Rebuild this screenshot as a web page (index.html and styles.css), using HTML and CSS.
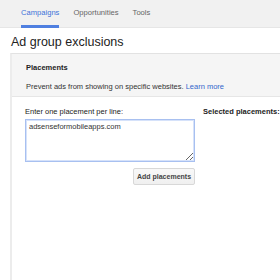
FILE: index.html
```html
<!DOCTYPE html>
<html>
<head>
<meta charset="utf-8">
<link rel="stylesheet" href="styles.css">
</head>
<body>
<nav class="tabs">
  <a class="tab active">Campaigns</a>
  <a class="tab">Opportunities</a>
  <a class="tab">Tools</a>
</nav>
<h1 class="title">Ad group exclusions</h1>
<section class="panel">
  <div class="panel-head">
    <div class="panel-title">Placements</div>
    <div class="panel-desc">Prevent ads from showing on specific websites. <a class="link">Learn more</a></div>
  </div>
  <div class="panel-body">
    <div class="col-enter">
      <div class="label">Enter one placement per line:</div>
      <textarea class="entry">adsenseformobileapps.com</textarea>
      <div class="actions"><button class="btn">Add placements</button></div>
    </div>
    <div class="col-selected">
      <div class="label bold">Selected placements:</div>
    </div>
  </div>
</section>
</body>
</html>
```
FILE: styles.css
```css
html, body {
  margin: 0;
  padding: 0;
  background: #ffffff;
  font-family: "Liberation Sans", Arial, sans-serif;
  color: #222;
  width: 280px;
  height: 280px;
  overflow: hidden;
}
.tabs {
  display: flex;
  gap: 14px;
  height: 28px;
  padding-left: 21px;
  background: #f1f1f1;
  border-bottom: 1px solid #e6e6e6;
  box-sizing: border-box;
}
.tab {
  font-size: 7.6px;
  color: #666;
  padding-top: 8px;
  box-sizing: border-box;
  height: 28px;
  border-bottom: 3px solid transparent;
}
.tab.active {
  color: #3d72d9;
  border-bottom-color: #4f7fe0;
}
.title {
  margin: 0;
  font-weight: normal;
  font-size: 12.5px;
  color: #222;
  padding: 7px 0 0 11px;
  height: 25px;
  box-sizing: border-box;
}
.panel {
  margin-left: 10px;
  border-left: 2px solid #ececec;
  border-top: 1px solid #e2e2e2;
  min-height: 240px;
}
.panel-head {
  background: #f5f5f5;
  padding: 9px 0 0 14px;
  height: 43px;
  box-sizing: border-box;
  border-bottom: 1px solid #e6e6e6;
}
.panel-title {
  font-weight: bold;
  font-size: 7.5px;
  color: #222;
}
.panel-desc {
  font-size: 7.5px;
  color: #333;
  margin-top: 10px;
  white-space: nowrap;
}
.link {
  color: #3366cc;
}
.panel-body {
  display: flex;
  padding: 10px 0 0 13px;
  gap: 8px;
}
.col-enter {
  width: 170px;
  display: flex;
  flex-direction: column;
}
.label {
  font-size: 7.5px;
  color: #222;
  white-space: nowrap;
}
.bold {
  font-weight: bold;
}
.entry {
  margin: 3px 0 0 0;
  width: 170px;
  height: 43px;
  box-sizing: border-box;
  border: 1px solid #a8c0f0;
  box-shadow: inset 0 0 0 1px #d6e2fa;
  font-family: "Liberation Sans", Arial, sans-serif;
  font-size: 7.5px;
  color: #333;
  padding: 2px 3px;
  resize: both;
  outline: none;
}
.actions {
  display: flex;
  justify-content: flex-end;
  margin-top: 6px;
}
.btn {
  width: 62px;
  height: 17px;
  font-family: "Liberation Sans", Arial, sans-serif;
  font-weight: bold;
  font-size: 7px;
  color: #444;
  background: linear-gradient(#f8f8f8, #f0f0f0);
  border: 1px solid #d8d8d8;
  border-radius: 2px;
  padding: 0;
}
```
